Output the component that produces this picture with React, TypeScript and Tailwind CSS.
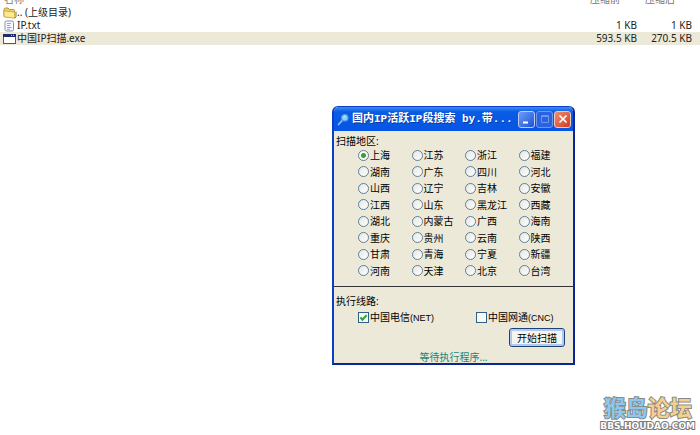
import React, { useState } from 'react';

const provinces = [
    '上海', '江苏', '浙江', '福建',
    '湖南', '广东', '四川', '河北',
    '山西', '辽宁', '吉林', '安徽',
    '江西', '山东', '黑龙江', '西藏',
    '湖北', '内蒙古', '广西', '海南',
    '重庆', '贵州', '云南', '陕西',
    '甘肃', '青海', '宁夏', '新疆',
    '河南', '天津', '北京', '台湾',
];

const FolderIcon = () => (
    <svg width="14" height="12" viewBox="0 0 14 12">
        <path d="M1 9.5V2.5Q1 1 2.5 1h2.5L6.5 2.5h4q1 0 1 1V10z" fill="#f0d068" stroke="#a98a3c" strokeWidth=".9" />
        <path d="M1 3.8 11 5q.8.2.8 1V11.2L2 10q-1-.1-1-.9z" fill="#fdea8e" stroke="#c09c3c" strokeWidth=".8" />
        <path d="M11.8 11.2 13 9.8V4.5" fill="none" stroke="#8f7838" />
    </svg>
);

const TextIcon = () => (
    <svg width="14" height="12" viewBox="0 0 14 12">
        <rect x="2" y="1" width="8.5" height="10" rx="1.5" fill="#f6f9ff" stroke="#8791a3" />
        <path d="M4 3.5h4M4 5.5h3M4 7.5h4.5M4 9.2h3" stroke="#7f95b8" strokeWidth=".8" />
    </svg>
);

const ExeIcon = () => (
    <svg width="14" height="12" viewBox="0 0 14 12">
        <rect x=".5" y="1.5" width="12" height="9" fill="#fff" stroke="#4b5a78" />
        <rect x="0" y="1" width="13" height="3" fill="#1c2c6e" />
        <path d="M8 2.3h1M10 2.3h1" stroke="#cfd8f2" />
    </svg>
);

const MagnifierIcon = () => (
    <svg width="13" height="13" viewBox="0 0 13 13">
        <path d="M1.5 11.5 5.5 7.2" stroke="#7ec0f5" strokeWidth="1.8" strokeLinecap="round" />
        <circle cx="7.8" cy="4.8" r="3.2" fill="#8fd0f8" stroke="#4c9fe8" strokeWidth="1.2" />
        <path d="M6.3 4.2q.6-1.2 2-1.2" fill="none" stroke="#e8f8ff" strokeWidth="1" />
    </svg>
);

const files = [
    { name: '.. (上级目录)', icon: <FolderIcon />, size: '', packed: '', selected: false },
    { name: 'IP.txt', icon: <TextIcon />, size: '1 KB', packed: '1 KB', selected: false },
    { name: '中国IP扫描.exe', icon: <ExeIcon />, size: '593.5 KB', packed: '270.5 KB', selected: true },
];

const FileList = () => (
    <table className="w-full table-fixed border-collapse text-[10px] leading-[13px] text-[#222]">
        <colgroup>
            <col />
            <col className="w-[55px]" />
            <col className="w-[55px]" />
            <col className="w-2" />
        </colgroup>
        <thead>
            <tr className="text-[#777]">
                <th className="p-0 pl-1 text-left font-normal">
                    <div className="flex h-[6px] items-end overflow-hidden">名称</div>
                </th>
                <th className="p-0 pl-2 text-left font-normal">
                    <div className="flex h-[6px] items-end overflow-hidden">压缩前</div>
                </th>
                <th className="p-0 pl-2 text-left font-normal">
                    <div className="flex h-[6px] items-end overflow-hidden">压缩后</div>
                </th>
                <th className="p-0" />
            </tr>
        </thead>
        <tbody>
            {files.map((file) => (
                <tr key={file.name} className={file.selected ? 'h-[13px] bg-[#ece9d8]' : 'h-[13px]'}>
                    <td className="p-0 pl-[3px]">
                        <div className="flex h-[13px] items-center">
                            {file.icon}
                            <span>{file.name}</span>
                        </div>
                    </td>
                    <td className="p-0 text-right">{file.size}</td>
                    <td className="p-0 text-right">{file.packed}</td>
                    <td className="p-0" />
                </tr>
            ))}
        </tbody>
    </table>
);

const captionButton = 'flex h-[17px] w-[17px] items-center justify-center rounded-[3px] border';

const TitleBar = () => (
    <div className="flex h-6 items-center bg-linear-to-b from-[#3a8cf5] via-[#0a5be6] via-20% to-[#0655e4] pr-[2px] pl-[3px]">
        <MagnifierIcon />
        <h1 className="ml-[2px] flex-1 whitespace-nowrap font-['Liberation_Mono','Noto_Sans_CJK_SC',monospace] text-[11px] font-bold text-white [text-shadow:1px_1px_#0a3aa0]">
            国内IP活跃IP段搜索 by.带...
        </h1>
        <div className="flex gap-px">
            <button type="button" aria-label="最小化" className={`${captionButton} border-[#b9cdf7] bg-linear-to-br from-[#6d9cf5] to-[#1f4fd8]`}>
                <svg width="14" height="14" viewBox="0 0 14 14"><path d="M3 10.5h5" stroke="#fff" strokeWidth="2" /></svg>
            </button>
            <button type="button" aria-label="最大化" className={`${captionButton} border-[#6f97ee] bg-[#2a62e2]`}>
                <svg width="14" height="14" viewBox="0 0 14 14"><path d="M3.5 3.5h7v7h-7zM3.5 4.5h7" fill="none" stroke="#6d96ee" /></svg>
            </button>
            <button type="button" aria-label="关闭" className={`${captionButton} border-[#f0c8bd] bg-linear-to-br from-[#ee8d72] to-[#cf3a16]`}>
                <svg width="14" height="14" viewBox="0 0 14 14"><path d="m3.5 3.5 7 7m0-7-7 7" stroke="#fff" strokeWidth="1.7" /></svg>
            </button>
        </div>
    </div>
);

const ScanWindow = () => {
    const [region, setRegion] = useState('上海');
    const [net, setNet] = useState(true);
    const [cnc, setCnc] = useState(false);

    const boxClass = "flex h-[11px] w-[11px] shrink-0 appearance-none items-center justify-center border border-[#2f5f8a] bg-[#f7f8f4] checked:before:h-[4px] checked:before:w-[7px] checked:before:-translate-y-px checked:before:-rotate-45 checked:before:border-b-2 checked:before:border-l-2 checked:before:border-[#2fa335] checked:before:content-['']";

    return (
        <section className="absolute top-[106px] left-[332px] w-[243px] overflow-hidden rounded-t-md border-2 border-t border-[#0a3fc8] border-r-[#0a2596] border-b-[#0a2596] bg-[#ece9d8] text-[10px] leading-3 text-black">
            <TitleBar />
            <form onSubmit={(e) => e.preventDefault()}>
                <fieldset>
                    <legend className="pt-1 pl-[2px]">扫描地区:</legend>
                    <div className="grid h-[132px] grid-cols-4 grid-rows-8 pr-px pl-6">
                        {provinces.map((name) => (
                            <label key={name} className="flex items-center gap-px whitespace-nowrap">
                                <input
                                    type="radio"
                                    name="region"
                                    checked={region === name}
                                    onChange={() => setRegion(name)}
                                    className="h-[11px] w-[11px] shrink-0 appearance-none rounded-full border border-[#5f7f99] bg-linear-to-br from-[#e6e8e4] to-white checked:bg-[radial-gradient(circle,#2fa335_0_2px,#fafaf6_3px)]"
                                />
                                {name}
                            </label>
                        ))}
                    </div>
                </fieldset>
                <hr className="mt-[7px] border-[#333]" />
                <fieldset>
                    <legend className="pt-2 pl-[2px]">执行线路:</legend>
                    <div className="flex pt-1 pl-6">
                        <label className="flex w-[118px] items-center gap-px whitespace-nowrap">
                            <input type="checkbox" checked={net} onChange={() => setNet(!net)} className={boxClass} />
                            <span>中国电信<span className="font-['Liberation_Sans',sans-serif] text-[9px]">(NET)</span></span>
                        </label>
                        <label className="flex items-center gap-px whitespace-nowrap">
                            <input type="checkbox" checked={cnc} onChange={() => setCnc(!cnc)} className={boxClass} />
                            <span>中国网通<span className="font-['Liberation_Sans',sans-serif] text-[9px]">(CNC)</span></span>
                        </label>
                    </div>
                </fieldset>
                <div className="flex justify-end pt-1 pr-2">
                    <button type="submit" className="h-[19px] w-14 rounded-[3px] border border-[#1d4478] bg-[#f5f4ee] shadow-[inset_0_0_0_2px_#b4c9ef]">
                        开始扫描
                    </button>
                </div>
                <p className="pt-1 text-center text-[#1c8578]">等待执行程序...</p>
            </form>
        </section>
    );
};

const ForumLogo = () => (
    <a href="#" className="absolute right-[5px] bottom-1 flex flex-col items-center whitespace-nowrap font-bold">
        <span className="text-[22px] leading-7 [-webkit-text-stroke:2px_#8a8a86] [paint-order:stroke]">
            <span className="text-[#8cc8f0]">猴岛</span>
            <span className="text-[#f5d08c]">论坛</span>
        </span>
        <span className="font-['DejaVu_Sans',sans-serif] text-[9px] leading-[10px] text-white [-webkit-text-stroke:2px_#777] [paint-order:stroke]">
            BBS.HOUDAO.COM
        </span>
    </a>
);

const App: React.FC = () => {
    return (
        <main className="relative min-h-screen bg-white font-['Noto_Sans','Noto_Sans_CJK_SC',sans-serif]">
            <FileList />
            <ScanWindow />
            <ForumLogo />
        </main>
    );
};

export default App;
